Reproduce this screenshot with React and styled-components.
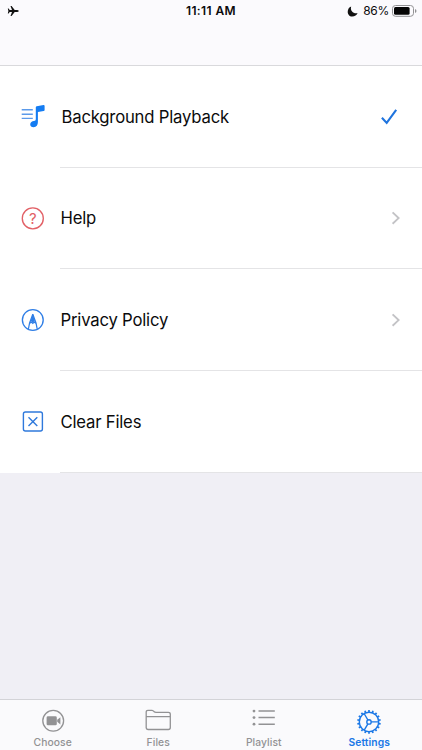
import React, { useState } from "react";
import styled, { createGlobalStyle } from "styled-components";

const GlobalStyle = createGlobalStyle`
  * {
    box-sizing: border-box;
  }
  body {
    margin: 0;
    font-family: Inter, "Liberation Sans", sans-serif;
    color: #0b0b0c;
    background: #f0eff5;
  }
`;

const Container = styled.div`
  height: 750px;
  width: 422px;
  display: flex;
  flex-direction: column;
  overflow: hidden;
  background: #f0eff5;
`;

const Header = styled.header`
  height: 66px;
  flex: none;
  background: #fbfafd;
  border-bottom: 1px solid #d9d9dc;
`;

const StatusBar = styled.div`
  height: 22px;
  padding: 0 5px 0 7px;
  display: grid;
  grid-template-columns: 1fr auto 1fr;
  align-items: center;
`;

const Time = styled.span`
  font-size: 12px;
  line-height: 22px;
  font-weight: 600;
  letter-spacing: 0.4px;
  margin-right: 2px;
`;

const StatusRight = styled.div`
  display: flex;
  align-items: center;
  justify-content: flex-end;
`;

const Percent = styled.span`
  font-size: 12px;
  line-height: 22px;
  letter-spacing: -0.3px;
  margin: 0 3px 0 5px;
`;

const List = styled.main`
  flex: 1;
`;

const Row = styled.div`
  height: ${(props) => props.$height}px;
  padding-left: 20px;
  display: flex;
  background: #fff;
  cursor: pointer;
`;

const IconBox = styled.div`
  width: 40px;
  flex: none;
  display: flex;
  align-items: center;
`;

const RowContent = styled.div`
  flex: 1;
  padding: 0 ${(props) => props.$end || 18}px 0 ${(props) => props.$indent || 0.5}px;
  display: flex;
  align-items: center;
  justify-content: space-between;
  border-bottom: 1px solid #e4e4e6;
`;

const Label = styled.span`
  font-size: 16.7px;
  line-height: 22px;
  letter-spacing: -0.2px;
`;

const TabBar = styled.nav`
  height: 51px;
  flex: none;
  display: grid;
  grid-template-columns: repeat(4, 1fr);
  background: #fafafc;
  border-top: 1px solid #d3d3d7;
`;

const Tab = styled.button`
  border: none;
  padding: 7px 0 0;
  background: none;
  font-family: inherit;
  font-weight: ${(props) => (props.$active ? 600 : 500)};
  display: flex;
  flex-direction: column;
  align-items: center;
  color: ${(props) => (props.$active ? "#1b78e6" : "#929294")};
  cursor: pointer;
`;

const TabLabel = styled.span`
  font-size: 10.3px;
  line-height: 14px;
  letter-spacing: 0.08px;
`;

const PlaneIcon = () => (
  <svg width="12" height="12" viewBox="0 0 12 12" fill="#111">
    <path d="M11.8 6 Q11.6 5 10 5 H7.7 L4.6 1 H3.5 L5 5 H2.7 L1.6 3.6 H.8 L1.4 6 L.8 8.4 H1.6 L2.7 7 H5 L3.5 11 H4.6 L7.7 7 H10 Q11.6 7 11.8 6Z" />
  </svg>
);

const MoonIcon = () => (
  <svg width="11" height="11" viewBox="0 0 11 11" fill="#111">
    <path d="M4.2 .4 C-.6 2 -.6 10.4 5.2 10.5 C7.8 10.5 9.8 9.2 10.6 7 C6.4 8.2 2.8 4.6 4.2 .4Z" />
  </svg>
);

const BatteryIcon = () => (
  <svg width="25" height="12" viewBox="0 0 25 12">
    <rect x=".5" y=".5" width="21" height="10.8" rx="3" fill="none" stroke="#929294" />
    <rect x="2" y="2" width="15.6" height="7.8" rx="1.5" fill="#050505" />
    <path d="M23 4 Q24.5 4.7 24.5 6 T23 8Z" fill="#929294" />
  </svg>
);

const MusicIcon = () => (
  <svg width="26" height="26" viewBox="0 0 26 26">
    <path d="M1.7 5.8H12.8M1.7 10.2H12.8M1.7 14.4H12.8" stroke="#5b9aea" strokeWidth="1.4" />
    <path d="M15.8 3.2 Q15.9 2.4 16.8 2.2 L23.5 1 Q24.6 .9 24.6 1.9 V6 Q24.6 6.9 23.7 7.1 L17.9 8.1 V18.1 C17.9 21.1 16.5 23.3 13.6 23.3 C11.5 23.3 10.1 22.1 10.2 20.3 C10.3 18.3 12 17.4 13.9 17.1 C15.3 16.9 15.8 16.4 15.8 15.1Z" fill="#147cf2" />
  </svg>
);

const HelpIcon = () => (
  <svg width="26" height="26" viewBox="0 0 26 26">
    <circle cx="12.8" cy="12.4" r="10.5" fill="none" stroke="#e26066" strokeWidth="1.35" />
    <text x="12.8" y="17.7" textAnchor="middle" fontSize="15" fontWeight="400" fontFamily="Inter, sans-serif" fill="#e26066">
      ?
    </text>
  </svg>
);

const PrivacyIcon = () => (
  <svg width="26" height="26" viewBox="0 0 26 26">
    <circle cx="12.8" cy="13" r="10.4" fill="none" stroke="#2f7ee6" strokeWidth="1.35" />
    <path d="M12.8 7.2 L9.6 16 L8.4 22 M12.8 7.2 L16 16 L17.2 22 M9.7 16.3 Q11.2 14.5 12.8 16.3 Q14.4 14.5 15.9 16.3" fill="none" stroke="#2f7ee6" strokeWidth="1.25" />
    <path d="M12.8 6.8 L10.5 14.5 Q11.7 14.6 12.8 15.8 Q13.9 14.6 15.1 14.5Z" fill="#2f7ee6" />
  </svg>
);

const ClearIcon = () => (
  <svg width="26" height="26" viewBox="0 0 26 26" fill="none" stroke="#2f79dc" strokeWidth="1.4">
    <rect x="3.4" y="3" width="19" height="19" rx="2" />
    <path d="M8.5 8.2 L17.3 17 M17.3 8.2 L8.5 17" />
  </svg>
);

const CheckIcon = () => (
  <svg width="24" height="24" viewBox="0 0 24 24" fill="none">
    <path d="M2.9 12.7 L7.7 17.9 L17.2 4.9" stroke="#1f74de" strokeWidth="2.1" />
  </svg>
);

const ChevronIcon = () => (
  <svg width="14" height="16" viewBox="0 0 14 16" fill="none">
    <path d="M2.6 2.4 L8.6 8.1 L2.6 13.8" stroke="#c3c3c6" strokeWidth="1.9" />
  </svg>
);

const CameraIcon = () => (
  <svg width="28" height="28" viewBox="0 0 28 28">
    <circle cx="14.2" cy="13.8" r="10.4" fill="none" stroke="#929294" strokeWidth="1.3" />
    <rect x="7.6" y="9.3" width="10.2" height="9" rx="1.4" fill="#929294" />
    <path d="M18.2 12.8 L21.4 10.2 V17.4 L18.2 14.8Z" fill="#929294" />
  </svg>
);

const FolderIcon = () => (
  <svg width="28" height="28" viewBox="0 0 28 28" fill="none" stroke="#929294" strokeWidth="1.3">
    <path d="M2.2 21 V5 Q2.2 3.3 3.9 3.3 H7.8 Q8.8 3.3 9.3 3.9 L10.2 4.8 Q10.8 5.4 12 5.4 H24.3 Q26.3 5.4 26.3 7.2 V20.5 Q26.3 22.5 24.3 22.5 H4.2 Q2.2 22.5 2.2 20.5 M2.2 9.7 H26.3" />
  </svg>
);

const ListIcon = () => (
  <svg width="28" height="28" viewBox="0 0 28 28">
    <path d="M8.5 4.1H24.8M8.5 10.6H24.8M8.5 17.2H24.8" stroke="#929294" strokeWidth="1.5" />
    <circle cx="4" cy="4.1" r="1.4" fill="#929294" />
    <circle cx="4" cy="10.6" r="1.4" fill="#929294" />
    <circle cx="4" cy="17.2" r="1.4" fill="#929294" />
  </svg>
);

const GearIcon = () => (
  <svg width="28" height="28" viewBox="0 0 28 28" fill="none" stroke="#1b78e6" strokeWidth="1.4">
    <circle cx="14" cy="14.9" r="9.7" />
    <circle cx="14" cy="14.9" r="2.2" />
    <path d="M16.2 14.9H23.7M12.9 13L9.1 6.5M12.9 16.8L9.1 23.3" />
    {Array.from({ length: 18 }, (_, i) => (
      <path key={i} d="M14 5.3V3.1" strokeWidth="1.7" transform={`rotate(${i * 20} 14 14.9)`} />
    ))}
  </svg>
);

const tabs = [
  { name: "Choose", icon: <CameraIcon /> },
  { name: "Files", icon: <FolderIcon /> },
  { name: "Playlist", icon: <ListIcon /> },
  { name: "Settings", icon: <GearIcon /> },
];

function App() {
  const [background, setBackground] = useState(true);
  const [active, setActive] = useState("Settings");

  return (
    <>
      <GlobalStyle />
      <Container>
        <Header>
          <StatusBar>
            <PlaneIcon />
            <Time>11:11 AM</Time>
            <StatusRight>
              <MoonIcon />
              <Percent>86%</Percent>
              <BatteryIcon />
            </StatusRight>
          </StatusBar>
        </Header>
        <List>
          <Row $height={102} onClick={() => setBackground(!background)}>
            <IconBox>
              <MusicIcon />
            </IconBox>
            <RowContent $indent={1.5} $end={19}>
              <Label>Background Playback</Label>
              {background && <CheckIcon />}
            </RowContent>
          </Row>
          <Row $height={101}>
            <IconBox>
              <HelpIcon />
            </IconBox>
            <RowContent>
              <Label>Help</Label>
              <ChevronIcon />
            </RowContent>
          </Row>
          <Row $height={102}>
            <IconBox>
              <PrivacyIcon />
            </IconBox>
            <RowContent>
              <Label>Privacy Policy</Label>
              <ChevronIcon />
            </RowContent>
          </Row>
          <Row $height={102}>
            <IconBox>
              <ClearIcon />
            </IconBox>
            <RowContent>
              <Label>Clear Files</Label>
            </RowContent>
          </Row>
        </List>
        <TabBar>
          {tabs.map((tab) => (
            <Tab key={tab.name} $active={active === tab.name} onClick={() => setActive(tab.name)}>
              {tab.icon}
              <TabLabel>{tab.name}</TabLabel>
            </Tab>
          ))}
        </TabBar>
      </Container>
    </>
  );
}

export default App;
